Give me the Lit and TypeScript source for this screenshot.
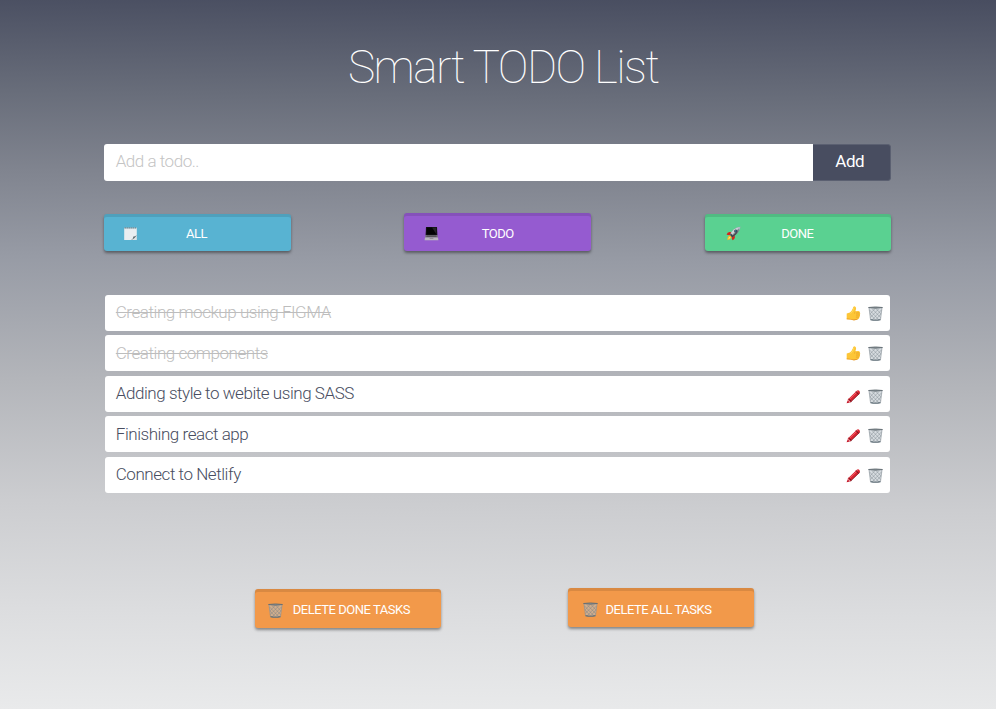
import { LitElement, html, css, svg, nothing } from "lit";
import { customElement, property } from "lit/decorators.js";

const basket = svg`
  <path d="M.8 1.6 L2.5 13.8 Q7.5 15 12.5 13.8 L14.2 1.6Z" fill="#b4bec4" fill-opacity=".55"/>
  <path d="M1.6 4 L11 14 M4 2.6 L12.5 11.5 M8 2.6 L13 8 M2.2 8 L7.5 14 M13.4 4 L4 14 M11 2.6 L2.4 11.5 M7 2.6 L2 8 M12.8 8 L7.5 14" stroke="#727d84" stroke-width=".55" fill="none" opacity=".75"/>
  <path d="M1 1.8 L2.5 13.6 M14 1.8 L12.5 13.6" stroke="#838d93" stroke-width=".6"/>
  <path d="M2.5 13.6 Q7.5 15 12.5 13.6" stroke="#5f6e77" stroke-width="1.1" fill="none"/>
  <path d="M.5 1.5 Q7.5 .3 14.5 1.5 Q7.5 3 .5 1.5Z" fill="#858e93" stroke="#626c72" stroke-width=".8"/>`;

const glyphs: Record<string, unknown> = {
  basket,
  note: svg`
    <path d="M1.2 1.8H13.8V9.4L9 14H1.2Z" fill="#e9eef1"/>
    <path d="M1.2 2.6H13.8" stroke="#b9c9d0" stroke-width=".8"/>
    <path d="M2.2 1V2.6M4.2 1V2.6M6.2 1V2.6M8.2 1V2.6M10.2 1V2.6M12.3 1V2.6" stroke="#65777f" stroke-width=".8"/>
    <path d="M13.8 9V14H8.2Z" fill="#dde3e5"/>
    <path d="M13.8 9Q12 10.8 10.4 10.6Q10.7 12.8 7.8 14Q11.7 13 13.8 9Z" fill="#59656a"/>`,
  laptop: svg`
    <path d="M2 1H13L13.4 9.2H1.6Z" fill="#17151b"/>
    <path d="M2.8 1.6H12.2L12.5 8.4H2.5Z" fill="#030304"/>
    <path d="M8 1.6H12.2L12.5 8.4Z" fill="#242326"/>
    <path d="M1.6 9H13.4L14 11.8H1Z" fill="#77777a"/>
    <path d="M2.6 9.4H12.4L12.7 10.8H2.3Z" fill="#4b484e"/>
    <path d="M1 11.6H14L14.4 14.2H.6Z" fill="#b8b6bd"/>
    <path d="M5.6 11.6H9.4V13H5.6Z" fill="#929096"/>`,
  rocket: svg`
    <path d="M4.6 6.2Q1.4 5.4 .6 8.8L4.2 9.2 7 6.1Z M8.7 9.8Q9.6 13 6.4 14.2L5.4 10.8 9.4 8Z" fill="#d7221c"/>
    <path d="M1.4 14.2Q1.2 10.6 3.3 9.6Q5.4 9.8 5.5 11.6Q4.4 13.8 1.4 14.2Z" fill="#f8bd26"/>
    <path d="M2.3 13.1Q2.6 11.3 3.7 10.7Q4.5 11.1 4.3 11.9Z" fill="#fff07a"/>
    <path d="M4 9Q6.2 2.4 14.4 .8Q13.4 8.1 6.2 11.2Z" fill="#7f8990"/>
    <path d="M4 9Q6.2 2.4 14.4 .8L5 10.1Z" fill="#ccd2d7"/>
    <path d="M11.4 1.7L14.4 .8Q14.2 2.6 13.4 4Z" fill="#adb8c5"/>
    <path d="M4 9L4.9 7.2L7.6 10.4L6.2 11.2Z" fill="#3f4146"/>
    <path d="M12.2 4.9Q10.6 8.2 7.6 10.4L6.8 9.4Z" fill="#3e444a"/>
    <circle cx="9.8" cy="5" r="1.6" fill="#293746"/>
    <circle cx="9.8" cy="4.9" r=".7" fill="#55a5d0"/>`,
  thumb: svg`
    <path d="M.7 7.6Q2.4 7.2 3.9 6.6Q6 4.8 6.8 2.6Q6.9 .3 8.3 .2Q10.3 .4 10.1 2.8Q9.9 4.2 9.3 5.3L12.4 5Q14 5.1 13.8 6.6Q14.6 7.6 13.9 8.8Q14.4 10 13.4 11Q13.5 12.5 12 13.2Q8.6 14.3 5 13.4L.7 13.2Z" fill="#fdc637"/>
    <path d="M.7 12.5Q3 12.3 5 12.9Q8.6 13.7 12.6 12.5Q11.5 14.3 8 14.4Q6 14.3 4.6 13.5L.7 13.2Z" fill="#e99a24"/>
    <path d="M10 7.1L13.6 6.9M10 9.1L13.7 8.9M9.9 11.1L13.2 11" stroke="#dd941f" stroke-width=".6"/>
    <path d="M9.3 5.4Q8.4 6.4 8.5 7.6" stroke="#e5a027" stroke-width=".6" fill="none"/>
    <path d="M4.6 7.5Q7.2 5.4 8 1.6" stroke="#ffdf65" stroke-width=".8" fill="none"/>`,
  crayon: svg`
    <path d="M.6 14.3L1.7 11.2L4 13.4Z" fill="#c51a2b"/>
    <path d="M1.6 10.8L10.8 1.8Q12 .9 13.4 1.9Q14.5 3.1 13.6 4.4L4.4 13.3Z" fill="#d92532"/>
    <path d="M3 10.8L11.8 2.3" stroke="#f3606a" stroke-width=".9"/>
    <path d="M2.7 9.9L5.4 12.5M10 2.6L12.5 5.3" stroke="#57141c" stroke-width=".9"/>
    <path d="M4.4 13.2L13.5 4.4" stroke="#7a121d" stroke-width=".8"/>`,
};

@customElement("emoji-icon")
class EmojiIcon extends LitElement {
  static styles = css`
    :host { display: block; width: 15px; height: 15px; flex: none; }
    svg { display: block; }
  `;
  @property() name = "";
  render() {
    return html`<svg width="15" height="15" viewBox="0 0 15 15">${glyphs[this.name] ?? nothing}</svg>`;
  }
}

interface Todo { text: string; done: boolean; low?: boolean }

const todos: Todo[] = [
  { text: "Creating mockup using FIGMA", done: true },
  { text: "Creating components", done: true },
  { text: "Adding style to webite using SASS", done: false, low: true },
  { text: "Finishing react app", done: false },
  { text: "Connect to Netlify", done: false },
];

@customElement("app-root")
class AppRoot extends LitElement {
  static styles = css`
    :host {
      display: block;
      box-sizing: border-box;
      height: 709px;
      overflow: hidden;
      padding: 0 105px 0 104.4px;
      font-family: Roboto, "Liberation Sans", sans-serif;
      background: linear-gradient(180.6deg, #484d60 0%, #686d7a 14%, #80848f 25%, #979ba5 37%, #b3b5ba 54%, #cccdd0 71%, #dcdddf 86%, #e9eaeb 100%);
    }
    * { box-sizing: border-box; }
    h1 {
      margin: 0;
      padding: 39px 0 0 11px;
      height: 143.6px;
      font-size: 46px;
      line-height: 56px;
      font-weight: 100;
      letter-spacing: -1.55px;
      color: #fff;
      text-align: center;
      white-space: nowrap;
    }
    .entry { display: flex; width: 786.4px; height: 37px; border-radius: 3px; overflow: hidden; letter-spacing: -.47px; }
    .field { flex: 1; background: #fff; padding-left: 11.3px; font-size: 17px; line-height: 35px; font-weight: 300; color: #c4c4c4; }
    .add { width: 78px; background: #484d60; border: 1px solid #5b6071; border-left: 0; border-radius: 0 3px 3px 0; color: #fff; font-size: 17px; line-height: 33px; text-align: center; padding-right: 3px; }
    .filters { display: flex; justify-content: space-between; align-items: flex-start; width: 786.6px; height: 82px; margin-top: 32.4px; }
    .btn {
      display: flex; align-items: center;
      width: 186.4px; height: 37px; padding-top: 3px;
      border-radius: 3px; color: #fff; font-size: 13px; line-height: 16px; letter-spacing: -.48px; white-space: nowrap;
      box-shadow: inset 0 3px 0 rgba(0, 0, 0, .1), 0 2px 3px rgba(0, 0, 0, .4);
    }
    .btn emoji-icon { margin-top: -1px; }
    .all { background: #58b3d2; padding-left: 19px; margin-top: 1px; }
    .todo { background: #955bd0; padding: 4px 0 0 19.2px; height: 38px; }
    .done { background: #5ad191; padding-left: 21.6px; margin-top: 1px; }
    .all span { margin-left: 47.6px; }
    .todo span { margin-left: 43px; }
    .done span { margin-left: 40px; }
    .list { display: flex; flex-direction: column; gap: 4.6px; width: 785px; margin: -.4px 0 0 .6px; }
    .row { display: flex; align-items: center; height: 36px; border-radius: 3px; background: #fff; padding: 0 7px 0 10.8px; color: #484d60; font-size: 17px; font-weight: 300; line-height: 36px; letter-spacing: -.45px; }
    .row.is-done { color: #bdbdbd; }
    .label { flex: 1; margin-top: -1px; }
    .is-done .label { text-decoration: line-through; }
    .tools { display: flex; gap: 7px; padding-top: 1.6px; }
    .tools.low { padding-top: 5px; }
    .bulk { display: flex; gap: 126.4px; margin: 94.6px 0 0 150.4px; align-items: flex-start; }
    .bulk .btn { background: #f2994a; height: 39px; }
    .bulk emoji-icon { margin-top: 0; }
    .clear-done { margin-top: 1.8px; padding-left: 13px; }
    .clear-done span { margin-left: 10px; }
    .clear-all { margin-top: .5px; }
    .bulk .clear-all { padding: 4px 0 0 15.4px; }
    .clear-all span { margin-left: 7.6px; }
  `;

  render() {
    return html`
      <h1>Smart TODO List</h1>
      <div class="entry"><div class="field">Add a todo..</div><div class="add">Add</div></div>
      <div class="filters">
        <div class="btn all"><emoji-icon name="note"></emoji-icon><span>ALL</span></div>
        <div class="btn todo"><emoji-icon name="laptop"></emoji-icon><span>TODO</span></div>
        <div class="btn done"><emoji-icon name="rocket"></emoji-icon><span>DONE</span></div>
      </div>
      <div class="list">
        ${todos.map((t) => html`
          <div class="row ${t.done ? "is-done" : ""}">
            <div class="label">${t.text}</div>
            <div class="tools ${t.low ? "low" : ""}">
              <emoji-icon name=${t.done ? "thumb" : "crayon"}></emoji-icon>
              <emoji-icon name="basket"></emoji-icon>
            </div>
          </div>`)}
      </div>
      <div class="bulk">
        <div class="btn clear-done"><emoji-icon name="basket"></emoji-icon><span>DELETE DONE TASKS</span></div>
        <div class="btn clear-all"><emoji-icon name="basket"></emoji-icon><span>DELETE ALL TASKS</span></div>
      </div>`;
  }
}
